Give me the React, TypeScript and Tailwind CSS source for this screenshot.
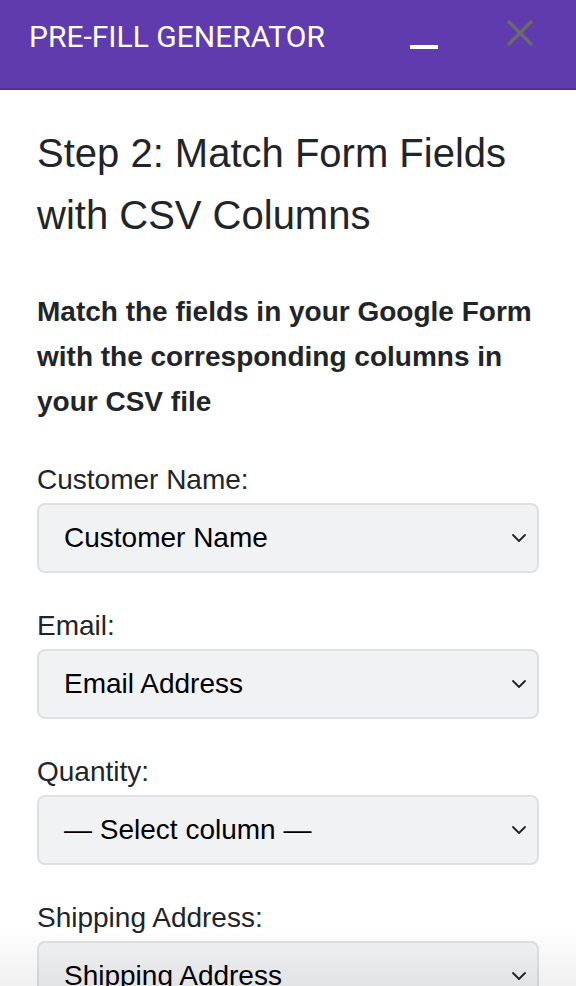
import { useState } from "react";

interface FieldRowProps {
  label: string;
  value: string;
}

function Chevron() {
  return (
    <svg width="16" height="10" viewBox="0 0 16 10" fill="none" className="shrink-0">
      <path d="M2 2l6 6 6-6" stroke="#222" strokeWidth="1.8" strokeLinecap="round" strokeLinejoin="round" />
    </svg>
  );
}

function FieldRow({ label, value }: FieldRowProps) {
  return (
    <div className="flex flex-col">
      <label className="text-[28px] leading-[34px] text-[#212529]">{label}</label>
      <div className="mt-[6px] flex h-[70px] items-center justify-between rounded-[8px] border-2 border-[#dee0e3] bg-[#f1f2f4] pl-[25px] pr-[10px]">
        <span className="text-[28px] text-black">{value}</span>
        <Chevron />
      </div>
    </div>
  );
}

export default function App() {
  const [fields] = useState([
    { label: "Customer Name:", value: "Customer Name" },
    { label: "Email:", value: "Email Address" },
    { label: "Quantity:", value: "— Select column —" },
    { label: "Shipping Address:", value: "Shipping Address" },
  ]);

  return (
    <div className="relative h-[986px] w-[576px] overflow-hidden bg-white font-['Liberation_Sans',Arial,sans-serif]">
      {/* header */}
      <div className="flex h-[90px] items-start border-b-2 border-[#4e3292] bg-[#5f3bad] pl-[29px] pr-[41px]">
        <h1 className="mt-[19px] font-['Roboto',sans-serif] text-[30px] leading-[36px] text-white">
          PRE-FILL GENERATOR
        </h1>
        <div className="ml-auto mt-[45px] h-[4px] w-[28px] bg-white" />
        <svg width="30" height="30" viewBox="0 0 30 30" className="ml-[67px] mt-[18px]">
          <path d="M3 3l24 24M27 3L3 27" stroke="#6a6a6a" strokeWidth="3.5" />
        </svg>
      </div>

      {/* body */}
      <div className="px-[37px] pt-[32px]">
        <h2 className="text-[40px] leading-[62px] text-[#212529]">
          Step 2: Match Form Fields with CSV Columns
        </h2>
        <p className="mt-[43px] text-[28px] font-bold leading-[45px] text-[#212529]">
          Match the fields in your Google Form with the corresponding columns in your CSV file
        </p>
        <div className="mt-[39px] flex flex-col gap-[36px]">
          {fields.map((f) => (
            <FieldRow key={f.label} label={f.label} value={f.value} />
          ))}
        </div>
      </div>

      {/* bottom fade */}
      <div className="pointer-events-none absolute inset-x-0 bottom-0 h-[60px] bg-gradient-to-b from-transparent to-black/[0.06]" />
    </div>
  );
}
